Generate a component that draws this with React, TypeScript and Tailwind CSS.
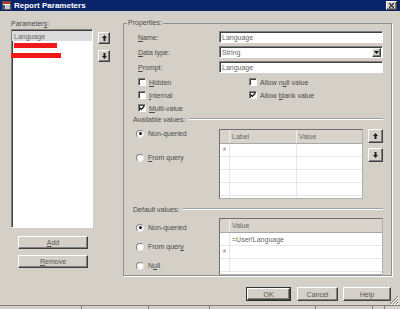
import React from 'react';

// classic 3d borders
const raised =
  'bg-[#d4d0c8] border border-t-white border-l-white border-r-[#404040] border-b-[#404040] shadow-[inset_-1px_-1px_0_#808080]';
const sunken =
  'bg-white border border-t-[#808080] border-l-[#808080] border-r-white border-b-white shadow-[inset_1px_1px_0_#404040]';

function Arrow({ down = false }: { down?: boolean }) {
  return (
    <svg width="5" height="6" viewBox="0 0 5 6" className={down ? 'rotate-180' : ''}>
      <polygon points="2.5,0 5,3 3.5,3 3.5,6 1.5,6 1.5,3 0,3" fill="#222" />
    </svg>
  );
}

function Btn({ children, className }: { children: React.ReactNode; className?: string }) {
  return (
    <div className={`${raised} flex items-center justify-center text-[#555] ${className ?? ''}`}>{children}</div>
  );
}

function Field({ value }: { value: string }) {
  return (
    <div className={`${sunken} flex-1 h-[12px] flex items-center pl-[2px] text-[#666]`}>{value}</div>
  );
}

function Row({ label, children }: { label: React.ReactNode; children: React.ReactNode }) {
  return (
    <div className="flex items-center h-[12px]">
      <span className="w-[81px]">{label}</span>
      {children}
    </div>
  );
}

function Check({ checked = false, label }: { checked?: boolean; label: React.ReactNode }) {
  return (
    <div className="flex items-center gap-[3px] h-[10px]">
      <span className={`${sunken} w-[8px] h-[8px] flex items-center justify-center`}>
        {checked && (
          <svg width="6" height="6" viewBox="0 0 6 6">
            <path d="M0.7 2.8 L2.3 4.4 L5.3 1.2" stroke="#111" strokeWidth="1.3" fill="none" />
          </svg>
        )}
      </span>
      <span>{label}</span>
    </div>
  );
}

function Radio({ on = false, label }: { on?: boolean; label: React.ReactNode }) {
  return (
    <div className="flex items-center gap-[4px] h-[9px]">
      <span className="w-[8px] h-[8px] rounded-full bg-white border border-t-[#808080] border-l-[#808080] border-r-[#e4e4e4] border-b-[#e4e4e4] flex items-center justify-center">
        {on && <span className="w-[3px] h-[3px] rounded-full bg-[#111]" />}
      </span>
      <span>{label}</span>
    </div>
  );
}

function Separator({ label }: { label: string }) {
  return (
    <div className="flex items-center h-[8px]">
      <span>{label}</span>
      <div className="ml-[4px] flex-1 h-[2px] border-t border-t-[#a0a0a0] border-b border-b-white" />
    </div>
  );
}

function GridRow({ cols, star = false, text = '' }: { cols: number[]; star?: boolean; text?: string }) {
  return (
    <div className="flex h-[13px] border-b border-[#e6e6e6] bg-white shrink-0">
      <div className="w-[10px] border-r border-[#e6e6e6] flex items-center justify-center text-[10px] text-[#999] pt-[3px]">
        {star ? '*' : ''}
      </div>
      {cols.map((w, i) => (
        <div
          key={i}
          className={`flex items-center pl-[2px] text-[#666] ${i === cols.length - 1 ? 'flex-1' : 'border-r border-[#e6e6e6]'}`}
          style={i === cols.length - 1 ? undefined : { width: w }}
        >
          {i === 0 ? text : ''}
        </div>
      ))}
    </div>
  );
}

function DataGrid({
  heads,
  widths,
  rows,
  className,
}: {
  heads: string[];
  widths: number[];
  rows: { star?: boolean; text?: string }[];
  className?: string;
}) {
  return (
    <div className={`border border-t-[#707070] border-l-[#707070] border-r-[#b0b0b0] border-b-[#b0b0b0] bg-white flex flex-col overflow-hidden ${className ?? ''}`}>
      <div className="flex h-[14px] shrink-0 bg-[#d8d4cc] border-b border-[#a8a8a8]">
        <div className="w-[10px] border-r border-[#efefef]" />
        {heads.map((h, i) => (
          <div
            key={h}
            className={`flex items-center pl-[2px] text-[#666] ${i === heads.length - 1 ? 'flex-1' : 'border-r border-[#efefef]'}`}
            style={i === heads.length - 1 ? undefined : { width: widths[i] }}
          >
            {h}
          </div>
        ))}
      </div>
      {rows.map((r, i) => (
        <GridRow key={i} cols={widths} star={r.star} text={r.text} />
      ))}
    </div>
  );
}

function TitleIcon() {
  return (
    <svg width="9" height="9" viewBox="0 0 9 9">
      <rect x="0.5" y="0.5" width="8" height="8" fill="#fff" stroke="#555" />
      <rect x="1" y="1" width="7" height="2" fill="#c03020" />
      <rect x="1" y="4" width="2" height="4" fill="#3050a0" />
      <line x1="3.5" y1="5" x2="8" y2="5" stroke="#888" />
      <line x1="3.5" y1="7" x2="8" y2="7" stroke="#888" />
    </svg>
  );
}

export default function App() {
  return (
    <div className="relative w-[400px] h-[309px] overflow-hidden bg-[#d4d0c8] flex flex-col font-['Liberation_Sans',Arial,sans-serif] text-[7px] leading-none text-[#4a4a4a]">
      {/* title bar */}
      <div className="h-[11px] shrink-0 bg-[#0a246a] flex items-center pl-[2px] pr-[3px]">
        <TitleIcon />
        <span className="ml-[3px] text-white font-bold text-[8px]">Report Parameters</span>
        <div className={`${raised} ml-auto w-[11px] h-[9px] flex items-center justify-center`}>
          <svg width="5" height="5" viewBox="0 0 5 5">
            <path d="M0 0 L5 5 M5 0 L0 5" stroke="#222" strokeWidth="1.2" />
          </svg>
        </div>
      </div>

      {/* body */}
      <div className="h-[271px] shrink-0 flex">
        {/* parameter list */}
        <div className="w-[82px] ml-[11px] pt-[9px] flex flex-col">
          <div className="h-[9px]">
            Parameter<u>s</u>:
          </div>
          <div className={`${sunken} h-[199px] pt-[1px] flex flex-col`}>
            <div className="h-[10px] bg-[#dcdcdc] flex items-center pl-[2px] text-[#666]">Language</div>
            <div className="h-[5px] w-[43px] ml-[2px] mt-[2px] bg-[#f01818]" />
            <div className="h-[5px] w-[50px] ml-[-1px] mt-[5px] bg-[#f01818]" />
          </div>
          <Btn className="mt-[8px] ml-[7px] w-[70px] h-[13px]">
            <span>
              <u>A</u>dd
            </span>
          </Btn>
          <Btn className="mt-[6px] ml-[7px] w-[70px] h-[13px]">
            <span>
              <u>R</u>emove
            </span>
          </Btn>
        </div>

        {/* move up / down */}
        <div className="ml-[5px] pt-[21px] flex flex-col gap-[6px]">
          <Btn className="w-[12px] h-[12px]">
            <Arrow />
          </Btn>
          <Btn className="w-[12px] h-[12px]">
            <Arrow down />
          </Btn>
        </div>

        {/* properties */}
        <fieldset className="ml-[13px] mt-[8px] w-[269px] self-start border border-[#909090] shadow-[1px_1px_0_#fff] pl-[9px] pr-[8px] pt-[4px]">
          <legend className="ml-[-6px] px-[1px] h-[8px] leading-[8px]">Properties:</legend>

          <div className="pl-[5px] flex flex-col gap-[3px]">
            <Row label={<><u>N</u>ame:</>}>
              <Field value="Language" />
            </Row>
            <Row label={<><u>D</u>ata type:</>}>
              <div className={`${sunken} flex-1 h-[12px] flex items-center pl-[2px] pr-[1px] text-[#666]`}>
                <span className="flex-1">String</span>
                <div className={`${raised} w-[9px] h-[9px] flex items-center justify-center`}>
                  <svg width="5" height="3" viewBox="0 0 5 3">
                    <polygon points="0,0 5,0 2.5,3" fill="#111" />
                  </svg>
                </div>
              </div>
            </Row>
            <Row label={<><u>P</u>rompt:</>}>
              <Field value="Language" />
            </Row>
          </div>

          <div className="mt-[4px] pl-[5px] grid grid-cols-[111px_1fr] gap-y-[3px]">
            <Check label={<><u>H</u>idden</>} />
            <Check label={<>Allow n<u>u</u>ll value</>} />
            <Check label={<><u>I</u>nternal</>} />
            <Check checked label={<>Allow <u>b</u>lank value</>} />
            <Check checked label={<><u>M</u>ulti-value</>} />
          </div>

          <div className="mt-[2px]">
            <Separator label="Available values:" />
          </div>

          <div className="mt-[6px] flex">
            <div className="w-[86px] pl-[3px] flex flex-col gap-[15px]">
              <Radio on label="Non-queried" />
              <Radio label={<><u>F</u>rom query</>} />
            </div>
            <DataGrid
              className="w-[144px] h-[70px]"
              heads={['Label', 'Value']}
              widths={[67, 0]}
              rows={[{ star: true }, {}, {}, {}, {}]}
            />
            <div className="ml-[5px] flex flex-col gap-[5px]">
              <Btn className="w-[15px] h-[14px]">
                <Arrow />
              </Btn>
              <Btn className="w-[15px] h-[14px]">
                <Arrow down />
              </Btn>
            </div>
          </div>

          <div className="mt-[6px]">
            <Separator label="Default values:" />
          </div>

          <div className="mt-[5px] flex">
            <div className="w-[86px] pl-[3px] pt-[5px] flex flex-col gap-[10px]">
              <Radio on label="Non-queried" />
              <Radio label={<>From quer<u>y</u></>} />
              <Radio label={<>N<u>u</u>ll</>} />
            </div>
            <DataGrid
              className="flex-1 h-[57px]"
              heads={['Value']}
              widths={[0]}
              rows={[{ text: '=User!Language' }, { star: true }, {}]}
            />
          </div>
        </fieldset>
      </div>

      {/* dialog buttons */}
      <div className="h-[23px] shrink-0 flex justify-end items-start pt-[5px] pr-[9px]">
        <div className="w-[45px] h-[14px] border border-[#303030]">
          <Btn className="w-full h-full">OK</Btn>
        </div>
        <Btn className="ml-[6px] w-[41px] h-[14px]">Cancel</Btn>
        <Btn className="ml-[5px] w-[48px] h-[14px]">Help</Btn>
      </div>

      {/* status strip of the window behind */}
      <div className="h-[4px] shrink-0 border-t border-[#808080] flex">
        <div className="w-[82px] border-r border-[#808080]" />
        <div className="w-[67px] border-r border-[#808080]" />
        <div className="w-[61px] border-r border-[#808080]" />
        <div className="w-[106px] border-r border-[#808080]" />
        <div className="w-[57px] border-r border-[#808080]" />
        <div className="w-[12px] border-r border-[#808080]" />
      </div>

      {/* resize grip */}
      <svg width="10" height="10" viewBox="0 0 10 10" className="absolute right-[1px] bottom-[4px]">
        <path d="M9 1 L1 9 M9 4 L4 9 M9 7 L7 9" stroke="#808080" strokeWidth="1" />
        <path d="M10 2 L2 10 M10 5 L5 10 M10 8 L8 10" stroke="#fff" strokeWidth="1" />
      </svg>
    </div>
  );
}
